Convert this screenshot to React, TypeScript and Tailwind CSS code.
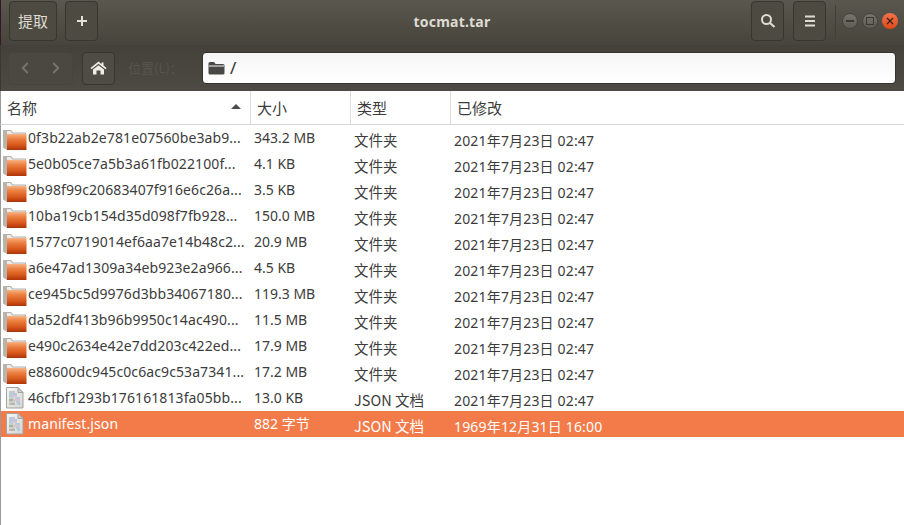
import { ChevronLeft, ChevronRight } from "lucide-react";

const SANS = "'Noto Sans', 'Noto Sans CJK SC', sans-serif";
const CJK = "'Noto Sans CJK SC', 'Noto Sans', sans-serif";

type Row = { name: string; size: string; type: string; date: string; kind: "folder" | "doc"; selected?: boolean };

const DATE = "2021年7月23日 02:47";

const ROWS: Row[] = [
  { name: "0f3b22ab2e781e07560be3ab9...", size: "343.2 MB", type: "文件夹", date: DATE, kind: "folder" },
  { name: "5e0b05ce7a5b3a61fb022100f...", size: "4.1 KB", type: "文件夹", date: DATE, kind: "folder" },
  { name: "9b98f99c20683407f916e6c26a...", size: "3.5 KB", type: "文件夹", date: DATE, kind: "folder" },
  { name: "10ba19cb154d35d098f7fb928...", size: "150.0 MB", type: "文件夹", date: DATE, kind: "folder" },
  { name: "1577c0719014ef6aa7e14b48c2...", size: "20.9 MB", type: "文件夹", date: DATE, kind: "folder" },
  { name: "a6e47ad1309a34eb923e2a966...", size: "4.5 KB", type: "文件夹", date: DATE, kind: "folder" },
  { name: "ce945bc5d9976d3bb34067180...", size: "119.3 MB", type: "文件夹", date: DATE, kind: "folder" },
  { name: "da52df413b96b9950c14ac490...", size: "11.5 MB", type: "文件夹", date: DATE, kind: "folder" },
  { name: "e490c2634e42e7dd203c422ed...", size: "17.9 MB", type: "文件夹", date: DATE, kind: "folder" },
  { name: "e88600dc945c0c6ac9c53a7341...", size: "17.2 MB", type: "文件夹", date: DATE, kind: "folder" },
  { name: "46cfbf1293b176161813fa05bb...", size: "13.0 KB", type: "JSON 文档", date: DATE, kind: "doc" },
  { name: "manifest.json", size: "882 字节", type: "JSON 文档", date: "1969年12月31日 16:00", kind: "doc", selected: true },
];

function FolderIcon() {
  return (
    <svg width="26" height="24" viewBox="0 0 26 24" className="shrink-0">
      <defs>
        <linearGradient id="folderFront" x1="0" y1="0" x2="0" y2="1">
          <stop offset="0" stopColor="#f7b384" />
          <stop offset="0.3" stopColor="#ec8040" />
          <stop offset="0.7" stopColor="#d6561a" />
          <stop offset="1" stopColor="#ad340a" />
        </linearGradient>
      </defs>
      <path d="M1 4h8l2 2.500h13V9H1z" fill="#b5b0aa" />
      <path d="M2 5h6.500l2 2.500H23V9H2z" fill="#ecebe8" />
      <path d="M1 4.500h4V24L1 21.500z" fill="#b8b3ad" />
      <path d="M5 8h19.500v16H5z" fill="url(#folderFront)" />
    </svg>
  );
}

function DocIcon() {
  return (
    <svg width="26" height="24" viewBox="0 0 26 24" className="shrink-0">
      <defs>
        <linearGradient id="docPage" x1="0" y1="0" x2="1" y2="1">
          <stop offset="0" stopColor="#f7f7f5" />
          <stop offset="1" stopColor="#d4d6d4" />
        </linearGradient>
      </defs>
      <path d="M4.500 1.500h11.500l5 5v15.500H4.500z" fill="url(#docPage)" stroke="#a3a3a0" />
      <path d="M16 1.500v5h5z" fill="#cfcfcc" stroke="#a3a3a0" />
      <path d="M7 6h6M7 8h8" stroke="#8fa6c4" />
      <path d="M7 10h3" stroke="#7fa8d8" />
      <path d="M10 10h5" stroke="#c9a3c9" />
      <path d="M7 12h5" stroke="#9cc49c" />
      <path d="M13 12h5" stroke="#8fb8d8" />
      <path d="M7 14h4" stroke="#777" />
      <path d="M11 14h7" stroke="#d8a0b8" />
      <path d="M7 16h6" stroke="#9cc49c" />
      <path d="M14 16h4" stroke="#8fb8d8" />
      <path d="M7 18h2" stroke="#d87a7a" />
      <path d="M9 18h4" stroke="#888" />
      <path d="M15 18h3" stroke="#8fb8d8" />
    </svg>
  );
}

function ToolButton({ children, className }: { children: React.ReactNode; className: string }) {
  return (
    <div className={`flex h-10 shrink-0 items-center justify-center rounded-[4px] border border-[#38362f] bg-[#4d4a42] text-[#dfdbd2] ${className}`}>
      {children}
    </div>
  );
}

function HeaderCell({ label, className }: { label: string; className: string }) {
  return (
    <div className={`flex h-full items-center border-r border-[#dcdcdc] pl-[6px] pt-[1px] text-[15px] text-[#3c3c3c] ${className}`} style={{ fontFamily: CJK }}>
      {label}
    </div>
  );
}

export default function App() {
  return (
    <div className="flex h-[525px] w-[904px] flex-col overflow-hidden bg-white" style={{ fontFamily: SANS }}>
      {/* Title bar */}
      <div className="flex h-[45px] shrink-0 items-center border-l border-[#33182b] bg-gradient-to-b from-[#5a574e] to-[#47443c] pb-[3px] pl-[8px] pr-[6px]">
        <div className="flex flex-1 items-center">
          <ToolButton className="w-[48px] pt-[1px] text-[15px]">
            <span style={{ fontFamily: CJK }}>提取</span>
          </ToolButton>
          <ToolButton className="ml-[8px] w-[33px]">
            <svg width="12" height="12" viewBox="0 0 12 12">
              <path d="M6 1v10M1 6h10" stroke="#e4e0d8" strokeWidth="2" />
            </svg>
          </ToolButton>
        </div>
        <div className="whitespace-nowrap pr-[3px] text-[14px] font-bold tracking-[0.2px] text-[#dfdbd2]">tocmat.tar</div>
        <div className="flex flex-1 items-center justify-end">
          <ToolButton className="w-[33px]">
            <svg width="16" height="16" viewBox="0 0 16 16">
              <circle cx="6.500" cy="6.500" r="4.500" fill="none" stroke="#dfdbd2" strokeWidth="2" />
              <path d="M10 10l4.500 4" stroke="#dfdbd2" strokeWidth="2.200" />
            </svg>
          </ToolButton>
          <ToolButton className="ml-[9px] w-[33px]">
            <svg width="12" height="12" viewBox="0 0 12 12">
              <path d="M1 1.500h10M1 6h10M1 10.500h10" stroke="#dfdbd2" strokeWidth="2" />
            </svg>
          </ToolButton>
          <div className="ml-[9px] h-[32px] w-px bg-[#423f38]" />
          <div className="ml-[6px] flex items-center gap-[4px]">
            <div className="flex h-4 w-4 items-center justify-center rounded-full border border-[#45433c] bg-gradient-to-b from-[#77746c] to-[#5f5c54]">
              <div className="h-[1.500px] w-[8px] bg-[#3a3833]" />
            </div>
            <div className="flex h-4 w-4 items-center justify-center rounded-full border border-[#45433c] bg-gradient-to-b from-[#77746c] to-[#5f5c54]">
              <div className="h-[8px] w-[8px] border border-[#3a3833]" />
            </div>
            <div className="flex h-4 w-4 items-center justify-center rounded-full bg-gradient-to-b from-[#f2734a] to-[#dd4814]">
              <svg width="8" height="8" viewBox="0 0 8 8">
                <path d="M1 1l6 6M7 1l-6 6" stroke="#3a2018" strokeWidth="1.300" />
              </svg>
            </div>
          </div>
        </div>
      </div>

      {/* Location bar */}
      <div className="flex h-[46px] shrink-0 items-center border-l border-[#3a3833] bg-gradient-to-b from-[#44413a] to-[#4d4a42] pl-[7px] pr-[8px]">
        <div className="flex h-[33px] w-[65px] items-center justify-around rounded-[4px] border border-[#47443d] bg-[#4a4840] text-[#77756d]">
          <ChevronLeft size={18} strokeWidth={2.400} />
          <ChevronRight size={18} strokeWidth={2.400} />
        </div>
        <div className="ml-[9px] flex h-[33px] w-[33px] items-center justify-center rounded-[4px] border border-[#38362f] bg-[#4f4c44]">
          <svg width="17" height="14" viewBox="0 0 17 14">
            <path d="M8.500 .5L.5 7l1 1.200L8.500 2.700l7 5.500 1-1.200-3-2.400V1.500h-2v1.700z" fill="#f0ede6" />
            <path d="M3 8.500L8.500 4.200 14 8.500v5h-3.500V9.500h-4v4H3z" fill="#f0ede6" />
          </svg>
        </div>
        <div className="ml-[13px] w-[74px] shrink-0 text-[13px] text-[#57544c]" style={{ fontFamily: CJK }}>位置(L)：</div>
        <div className="flex h-[32px] flex-1 items-center rounded-[4px] border border-[#35332d] bg-gradient-to-b from-[#f6f6f6] to-white pl-[5px] text-[17px] text-[#333]">
          <svg width="17" height="14" viewBox="0 0 17 14">
            <path d="M.5 2.500A1.500 1.500 0 0 1 2 1h4l1.500 2H15a1.500 1.500 0 0 1 1.500 1.500V12a1.500 1.500 0 0 1-1.500 1.500H2A1.500 1.500 0 0 1 .5 12z" fill="#4a4844" />
            <path d="M1 5h15" stroke="#f7f7f7" strokeWidth="1" />
          </svg>
          <span className="ml-[5px]">/</span>
        </div>
      </div>

      {/* Column headers */}
      <div className="flex h-[34px] shrink-0 items-center border-b border-l border-b-[#d6d6d6] border-l-[#9a9a9a] bg-white">
        <div className="relative h-full w-[250px]">
          <HeaderCell label="名称" className="w-full" />
          <svg width="10" height="5" viewBox="0 0 10 5" className="absolute right-[10px] top-[13px]">
            <path d="M5 0l5 5H0z" fill="#4c4c4c" />
          </svg>
        </div>
        <HeaderCell label="大小" className="w-[100px]" />
        <HeaderCell label="类型" className="w-[100px]" />
        <div className="flex h-full items-center pl-[6px] pt-[1px] text-[15px] text-[#3c3c3c]" style={{ fontFamily: CJK }}>已修改</div>
      </div>

      {/* File list */}
      <div className="flex flex-1 flex-col border-l border-[#9a9a9a]">
        {ROWS.map((row) => (
          <div key={row.name} className={`flex h-[26px] items-center text-[14px] ${row.selected ? "bg-[#f37b4a] text-white" : "text-[#3c3c3c]"}`}>
            <div className="flex w-[253px] items-center pl-[1px]">
              {row.kind === "folder" ? <FolderIcon /> : <DocIcon />}
              <span className="-translate-y-[1px] whitespace-nowrap tracking-[0.1px]">{row.name}</span>
            </div>
            <div className="w-[100px] -translate-y-[1px]">{row.size}</div>
            <div className="w-[100px] translate-y-[2px] text-[14.500px]" style={{ fontFamily: CJK }}>{row.type}</div>
            <div className="translate-y-[2px] whitespace-nowrap tracking-[0.17px]">{row.date}</div>
          </div>
        ))}
      </div>
    </div>
  );
}
